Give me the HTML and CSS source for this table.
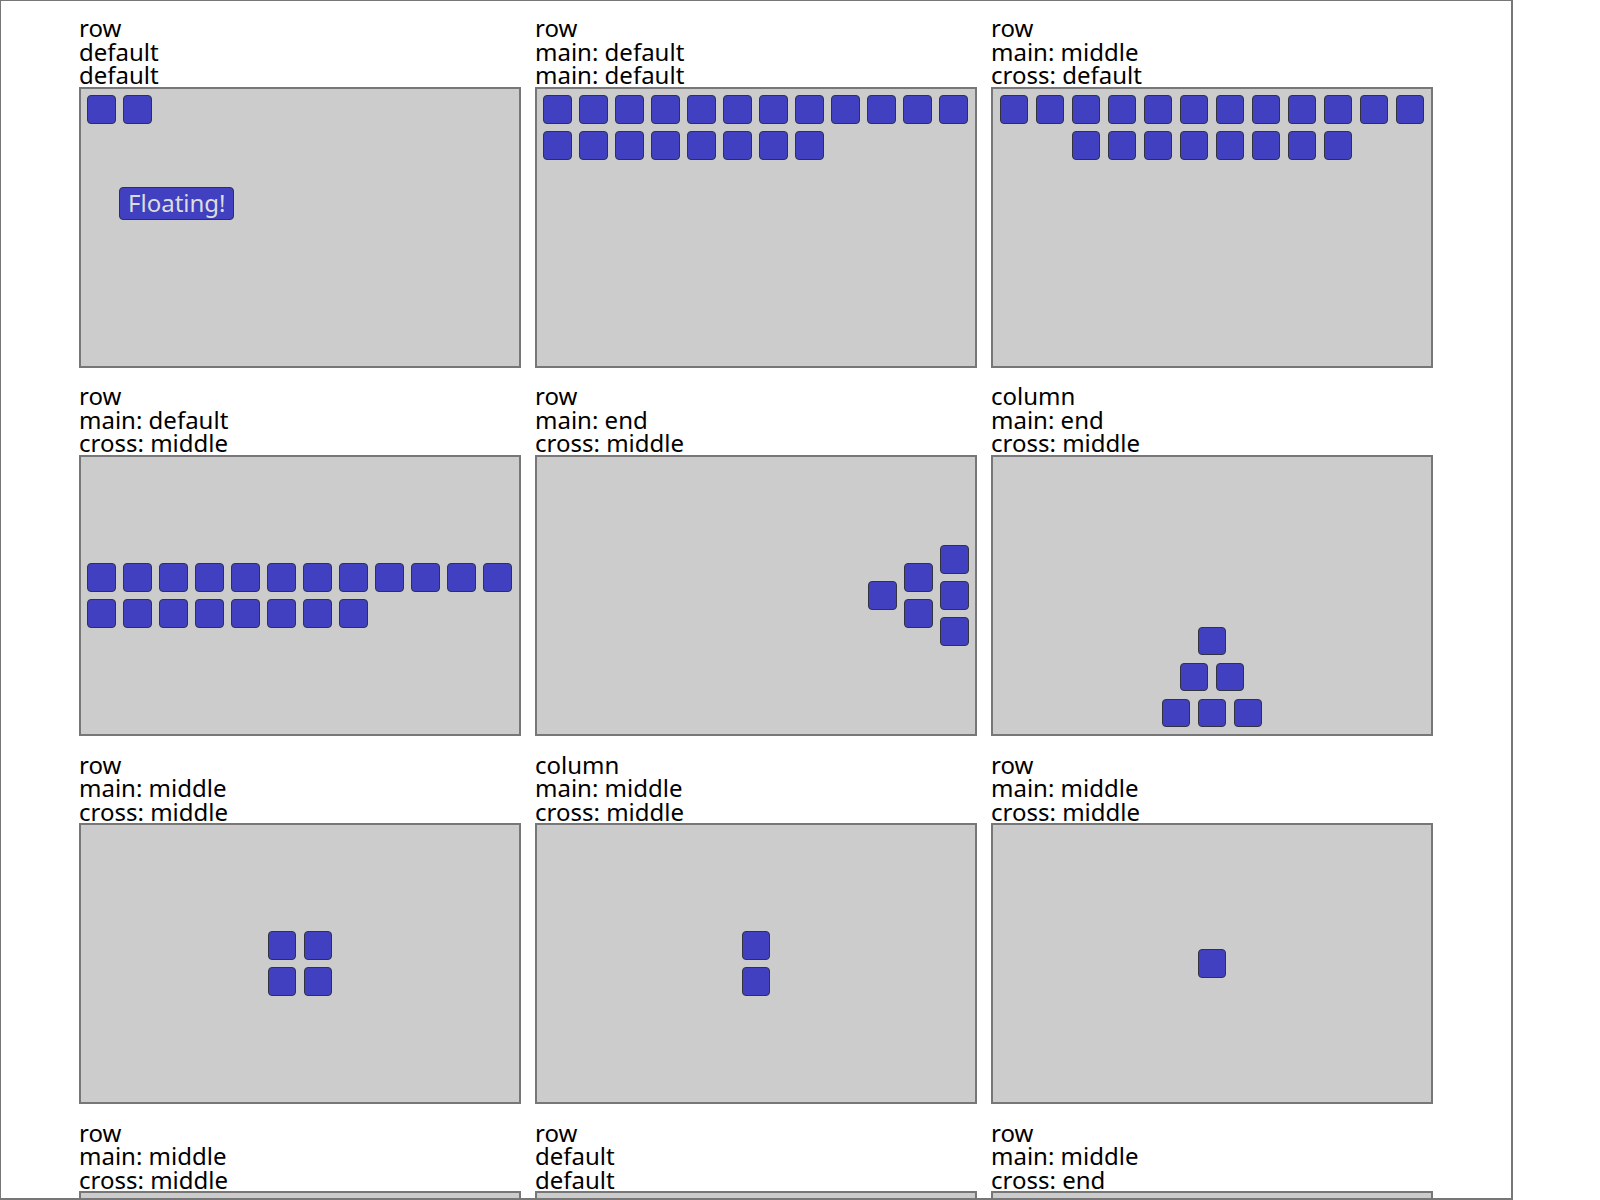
FILE: index.html
```html
<!DOCTYPE html>
<html>
<head>
<meta charset="utf-8">
<link rel="stylesheet" href="styles.css">
</head>
<body>
<div class="frame">
  <div class="grid">
    <div class="cell">
      <div class="label">row<br>default<br>default</div>
      <div class="box wrap">
        <div class="sq"></div><div class="sq"></div>
        <div class="floating">Floating!</div>
      </div>
    </div>
    <div class="cell">
      <div class="label">row<br>main: default<br>main: default</div>
      <div class="box wrap">
        <div class="sq"></div><div class="sq"></div><div class="sq"></div><div class="sq"></div><div class="sq"></div><div class="sq"></div><div class="sq"></div><div class="sq"></div><div class="sq"></div><div class="sq"></div><div class="sq"></div><div class="sq"></div><div class="sq"></div><div class="sq"></div><div class="sq"></div><div class="sq"></div><div class="sq"></div><div class="sq"></div><div class="sq"></div><div class="sq"></div>
      </div>
    </div>
    <div class="cell">
      <div class="label">row<br>main: middle<br>cross: default</div>
      <div class="box wrap main-middle">
        <div class="sq"></div><div class="sq"></div><div class="sq"></div><div class="sq"></div><div class="sq"></div><div class="sq"></div><div class="sq"></div><div class="sq"></div><div class="sq"></div><div class="sq"></div><div class="sq"></div><div class="sq"></div><div class="sq"></div><div class="sq"></div><div class="sq"></div><div class="sq"></div><div class="sq"></div><div class="sq"></div><div class="sq"></div><div class="sq"></div>
      </div>
    </div>

    <div class="cell">
      <div class="label">row<br>main: default<br>cross: middle</div>
      <div class="box wrap cross-middle">
        <div class="sq"></div><div class="sq"></div><div class="sq"></div><div class="sq"></div><div class="sq"></div><div class="sq"></div><div class="sq"></div><div class="sq"></div><div class="sq"></div><div class="sq"></div><div class="sq"></div><div class="sq"></div><div class="sq"></div><div class="sq"></div><div class="sq"></div><div class="sq"></div><div class="sq"></div><div class="sq"></div><div class="sq"></div><div class="sq"></div>
      </div>
    </div>
    <div class="cell">
      <div class="label">row<br>main: end<br>cross: middle</div>
      <div class="box row main-end cross-middle">
        <div class="sq"></div>
        <div class="col"><div class="sq"></div><div class="sq"></div></div>
        <div class="col"><div class="sq"></div><div class="sq"></div><div class="sq"></div></div>
      </div>
    </div>
    <div class="cell">
      <div class="label">column<br>main: end<br>cross: middle</div>
      <div class="box column main-end cross-middle">
        <div class="row"><div class="sq"></div></div>
        <div class="row"><div class="sq"></div><div class="sq"></div></div>
        <div class="row"><div class="sq"></div><div class="sq"></div><div class="sq"></div></div>
      </div>
    </div>

    <div class="cell">
      <div class="label">row<br>main: middle<br>cross: middle</div>
      <div class="box row main-middle cross-middle">
        <div class="col"><div class="sq"></div><div class="sq"></div></div>
        <div class="col"><div class="sq"></div><div class="sq"></div></div>
      </div>
    </div>
    <div class="cell">
      <div class="label">column<br>main: middle<br>cross: middle</div>
      <div class="box column main-middle cross-middle">
        <div class="sq"></div><div class="sq"></div>
      </div>
    </div>
    <div class="cell">
      <div class="label">row<br>main: middle<br>cross: middle</div>
      <div class="box row main-middle cross-middle">
        <div class="sq"></div>
      </div>
    </div>

    <div class="cell">
      <div class="label">row<br>main: middle<br>cross: middle</div>
      <div class="box row main-middle cross-middle">
        <div class="sq"></div><div class="sq"></div>
      </div>
    </div>
    <div class="cell">
      <div class="label">row<br>default<br>default</div>
      <div class="box wrap">
        <div class="sq"></div><div class="sq"></div><div class="sq"></div>
      </div>
    </div>
    <div class="cell">
      <div class="label">row<br>main: middle<br>cross: end</div>
      <div class="box row main-middle cross-end">
        <div class="sq"></div><div class="sq"></div>
      </div>
    </div>
  </div>
</div>
</body>
</html>
```
FILE: styles.css
```css
html, body {
  margin: 0;
  padding: 0;
  background: #ffffff;
}

body {
  overflow: hidden;
}

.frame {
  box-sizing: border-box;
  width: 1514px;
  height: 1201px;
  margin: -1px 0 0 -1px;
  border: 2px solid #777777;
  padding: 15px 0 0 78px;
  overflow: hidden;
  font-family: "Noto Sans", "Open Sans", sans-serif;
}

.grid {
  display: grid;
  grid-template-columns: repeat(3, 442px);
  column-gap: 14px;
  row-gap: 16.8px;
}

.cell {
  display: flex;
  flex-direction: column;
}

.label {
  height: 70.5px;
  font-size: 24px;
  line-height: 23.5px;
  color: #000000;
  white-space: nowrap;
}

.box {
  position: relative;
  box-sizing: border-box;
  width: 442px;
  height: 281px;
  background: #cccccc;
  border: 2px solid #777777;
  padding: 2.8px;
  display: flex;
}

.wrap {
  flex-wrap: wrap;
  align-content: flex-start;
  align-items: flex-start;
}

.wrap.cross-middle {
  align-content: center;
}

.row {
  display: flex;
  flex-direction: row;
}

.column,
.col {
  display: flex;
  flex-direction: column;
}

.main-middle {
  justify-content: center;
}

.main-end {
  justify-content: flex-end;
}

.cross-middle {
  align-items: center;
}

.cross-end {
  align-items: flex-end;
}

.column.cross-middle .row {
  justify-content: center;
}

.sq {
  box-sizing: border-box;
  flex: none;
  width: 28.8px;
  height: 28.8px;
  margin: 3.6px;
  background: #4040c0;
  border: 1.2px solid #333340;
  border-radius: 4px;
}

.floating {
  position: absolute;
  left: 38.3px;
  top: 98px;
  box-sizing: border-box;
  width: 115px;
  height: 33.4px;
  background: #4040c0;
  border: 1.2px solid #333340;
  border-radius: 4px;
  color: #dddddd;
  font-size: 24px;
  line-height: 30px;
  text-align: center;
  white-space: nowrap;
}
```
